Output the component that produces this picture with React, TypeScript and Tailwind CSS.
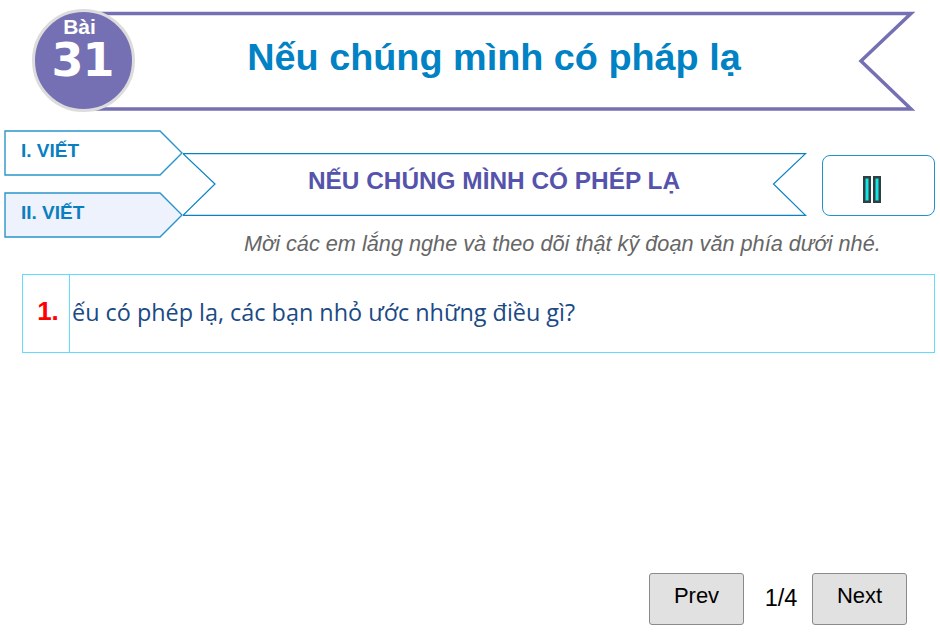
import { Fragment } from "react";

const SANS = "font-['Liberation_Sans',Arial,sans-serif]";

function TabShape({ active }: { active?: boolean }) {
    return (
        <svg className="absolute inset-0" width="180" height="46" viewBox="0 0 180 46">
            <path d="M1 1H156L178 23L156 45H1Z" fill={active ? "#edf2fd" : "#ffffff"} stroke="#2a95cc" strokeWidth="1.4" />
        </svg>
    );
}

function Tab({ label, active }: { label: string; active?: boolean }) {
    return (
        <div className="relative w-[180px] h-[46px] flex items-center pl-[17px] pb-[4px]">
            <TabShape active={active} />
            <span className="relative text-[19px] font-bold text-[#0a7fc0]">{label}</span>
        </div>
    );
}

export default function App() {
    return (
        <div className={`${SANS} w-[940px] h-[635px] bg-white flex flex-col overflow-hidden`}>
            {/* lesson title */}
            <div className="relative h-[103px] mt-[9px] flex items-center">
                <svg className="absolute inset-0" width="940" height="103" viewBox="0 0 940 103">
                    <path d="M85 4.500H911L861 52L911 100H85" fill="none" stroke="#7570b3" strokeWidth="3.500" />
                </svg>
                <div className="relative ml-[32px] w-[103px] h-[103px] rounded-full bg-[#7570b3] border-[3px] border-[#dcdcdc] flex flex-col items-center text-white shrink-0">
                    <span className="text-[21px] leading-[18px] font-bold mt-[6px] mr-[8px]">Bài</span>
                    <span className="font-['DejaVu_Sans',sans-serif] text-[46px] tracking-[-1px] leading-[44px] mt-[2px] mr-[2px] font-bold">31</span>
                </div>
                <h1 className="relative w-[718px] text-center text-[37.800px] leading-[44px] font-bold text-[#0082c4] mb-[8px]">Nếu chúng mình có pháp lạ</h1>
            </div>

            {/* section heading */}
            <div className="flex mt-[18px] ml-[4px]">
                <div className="flex flex-col gap-[16px] w-[179px] shrink-0 z-10">
                    <Tab label="I. VIẾT" />
                    <Tab label="II. VIẾT" active />
                </div>
                <div className="flex flex-col pt-[23px]">
                    <div className="flex">
                        <div className="relative w-[624px] h-[63px] flex items-center justify-center">
                            <svg className="absolute inset-0" width="624" height="63" viewBox="0 0 624 63">
                                <path d="M0 .7H622.500L590.500 31L622.500 62.300H0L32 31Z" fill="#ffffff" stroke="#0a82c4" strokeWidth="1.200" />
                            </svg>
                            <span className="relative text-[24.400px] font-bold text-[#5553ab] mb-[6px] mr-[2px]">NẾU CHÚNG MÌNH CÓ PHÉP LẠ</span>
                        </div>
                        <button className="w-[113px] h-[61px] mt-[2px] ml-[15px] bg-white border border-[#2092cc] rounded-[8px] flex items-center justify-center">
                            <svg className="mt-[8px] mr-[14px]" width="18" height="27" viewBox="0 0 18 27">
                                {[0, 10].map((x) => (
                                    <Fragment key={x}>
                                        <rect x={x} y="0" width="8" height="27" fill="#2f4045" />
                                        <rect x={x + 2.500} y="2.500" width="3" height="22" fill="#14e6e6" />
                                    </Fragment>
                                ))}
                            </svg>
                        </button>
                    </div>
                    <p className="ml-[61px] mt-[14px] text-[21.700px] leading-[28px] italic text-[#666666] whitespace-nowrap">Mời các em lắng nghe và theo dõi thật kỹ đoạn văn phía dưới nhé.</p>
                </div>
            </div>

            {/* question */}
            <div className="flex ml-[22px] mt-[16px] w-[913px] h-[79px] border border-[#5fdcff]">
                <div className="w-[47px] shrink-0 border-r border-[#5fdcff] flex justify-center pt-[20px] pl-[4px]">
                    <span className="text-[26px] leading-[32px] font-bold text-[#ff0000]">1.</span>
                </div>
                <div className="pl-[2px] pt-[19px] font-['Open_Sans',sans-serif] text-[23.400px] leading-[36px] text-[#1a4a85]">ếu có phép lạ, các bạn nhỏ ước những điều gì?</div>
            </div>

            {/* pager */}
            <div className="mt-auto mb-[10px] mr-[33px] flex items-center justify-end">
                <button className="w-[95px] h-[52px] bg-[#e1e1e1] border border-[#8a8a8a] rounded-[3px] text-[22px] text-black pb-[7px]">Prev</button>
                <span className="w-[68px] text-center text-[23.500px] text-black pl-[6px]">1/4</span>
                <button className="w-[95px] h-[52px] bg-[#e1e1e1] border border-[#8a8a8a] rounded-[3px] text-[22px] text-black pb-[7px]">Next</button>
            </div>
        </div>
    );
}
